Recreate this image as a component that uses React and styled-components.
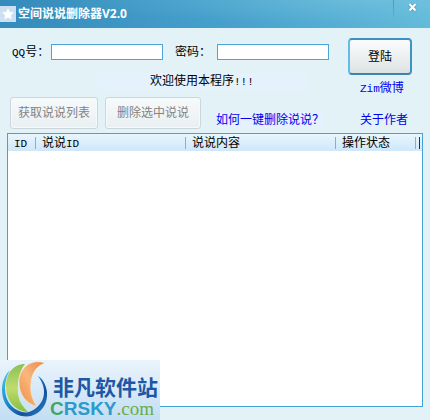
import React, { useState } from 'react';
import styled, { createGlobalStyle } from 'styled-components';

const GlobalStyle = createGlobalStyle`
  * { box-sizing: border-box; }
  body {
    margin: 0;
    background: #e3f2f7;
    color: #000;
    font-family: "Liberation Sans", "Noto Sans CJK SC", sans-serif;
    font-size: 12px;
    line-height: 16px;
  }
  button, input { font: inherit; }
`;

const Window = styled.div`
  position: relative;
  display: flex;
  flex-direction: column;
  min-height: 100vh;
  overflow: hidden;
`;

const TitleBar = styled.header`
  display: flex;
  align-items: center;
  height: 28px;
  padding-right: 10px;
  background:
    radial-gradient(ellipse at 85% 0, rgba(130, 205, 228, 0.4), transparent 60%),
    linear-gradient(90deg, #358bbb, #459fcb 50%, #63bada);
`;

const AppIcon = styled.svg`
  width: 16px;
  height: 16px;
  background: #cbe0f2;
`;

const Title = styled.h1`
  flex: 1;
  margin: 0 0 0 2px;
  font-family: "Open Sans", "Noto Sans CJK SC", sans-serif;
  font-size: 12px;
  font-weight: 700;
  color: #fff;
`;

const CloseButton = styled.button`
  display: flex;
  align-items: flex-start;
  justify-content: flex-end;
  width: 27px;
  height: 28px;
  padding: 3px 3px 0 0;
  border: none;
  background: linear-gradient(#4a9dc0, #5cabcb) 0 0 / 1px 16px no-repeat;
  cursor: pointer;
`;

const Panel = styled.main`
  display: flex;
  justify-content: space-between;
  padding: 10px 18px 4px 10px;
`;

const Controls = styled.div`
  display: flex;
  flex-direction: column;
`;

const Fields = styled.div`
  display: flex;
  align-items: center;
  height: 28px;
  padding-left: 2px;
`;

const Label = styled.label`
  width: ${p => p.$width}px;
  white-space: nowrap;
`;

const TextBox = styled.input`
  width: 112px;
  height: 16px;
  margin-right: 12px;
  padding: 0 3px;
  border: 1px solid #4da4d8;
  background: #fff;
  outline: none;
`;

// latin characters take about half the width of a chinese one
const Latin = styled.span`
  font-family: "Liberation Mono", monospace;
  font-size: 11px;
  line-height: 1;
`;

const Message = styled.p`
  width: 210px;
  margin: 7px 0 7px 87px;
  padding-left: 53px;
  background: #e5f1fc;
  line-height: 17px;
  white-space: nowrap;
`;

const Actions = styled.div`
  display: flex;
  align-items: center;
  gap: 7px;
`;

const ActionButton = styled.button`
  height: 32px;
  width: ${p => p.$width}px;
  padding: 0;
  border: 1px solid #ccd7dd;
  border-radius: 3px;
  background: linear-gradient(#f7fafb, #e9eff2);
  box-shadow: inset 0 0 0 1px #f4f9fb;
  color: #838383;
  white-space: nowrap;
`;

const Side = styled.aside`
  display: flex;
  flex-direction: column;
  align-items: flex-start;
  width: 64px;
`;

const LoginButton = styled.button`
  width: 64px;
  height: 37px;
  padding: 0;
  border: 2px solid;
  border-color: #3c8fc0 #3f93c0 #3c84ad #62bce6;
  border-radius: 4px;
  background: linear-gradient(#fafbfc, #edf0f1 50%, #dce2e4);
  cursor: pointer;
`;

const Link = styled.a`
  color: #0000f0;
  text-decoration: none;
  white-space: nowrap;
`;

const HelpLink = styled(Link)`
  margin: 14px 0 0 8px;
  background: #e5f1fc;
`;

const SideLink = styled(Link)`
  margin: ${p => p.$top}px 0 0 12px;
`;

const ListBox = styled.section`
  flex: 1;
  margin: 0 7px 13px;
  border: 1px solid #45a1d8;
  background: #fff;
`;

const Table = styled.table`
  width: 100%;
  border-collapse: collapse;
  table-layout: fixed;
`;

const Col = styled.col`
  width: ${p => p.$width}px;
`;

const HeadCell = styled.th`
  height: 17px;
  padding: 0 0 0 6px;
  background:
    linear-gradient(#72b7df, #72b7df) right 3px / 1px 12px no-repeat,
    linear-gradient(#e8f6fe, #cfe7f9);
  font-weight: 400;
  line-height: 16px;
  text-align: left;
  white-space: nowrap;
`;

const EndCell = styled.td`
  padding: 0;
  background:
    linear-gradient(#1b3448, #1b3448) 3px 3px / 1px 12px no-repeat,
    linear-gradient(#e8f6fe, #cfe7f9);
`;

const Brand = styled.div`
  position: absolute;
  left: 0;
  bottom: 0;
  display: flex;
  width: 160px;
  height: 60px;
  background: linear-gradient(#eaf4fc, #c2def3);
`;

const BrandMark = styled.svg`
  flex: none;
  width: 50px;
  height: 60px;
`;

const BrandText = styled.div`
  padding-top: 16px;
  white-space: nowrap;
`;

const BrandName = styled.div`
  padding-left: 3px;
  color: #1d57a6;
  font-size: 21px;
  font-weight: 700;
  line-height: 24px;
`;

const BrandSite = styled.div`
  color: #2c9ad0;
  font-size: 19px;
  font-weight: 700;
  line-height: 18px;
`;

const Initial = styled.span`
  color: #3fa66b;
`;

const Domain = styled.span`
  color: #69ad45;
  font-family: "Liberation Serif", serif;
  font-weight: 400;
`;

const columns = [
  { key: 'id', width: 28, title: <Latin>ID</Latin> },
  { key: 'postId', width: 150, title: <>说说<Latin>ID</Latin></> },
  { key: 'content', width: 150, title: '说说内容' },
  { key: 'status', width: 80, title: '操作状态' }
];

function BrandLogo() {
  return (
    <Brand>
      <BrandMark viewBox="0 0 50 60" aria-hidden="true">
        <defs>
          <linearGradient id="ring" x1="0" y1="0" x2="1" y2="1">
            <stop offset="0" stopColor="#58c4ec" />
            <stop offset="0.4" stopColor="#168fce" />
            <stop offset="0.7" stopColor="#174f9c" />
            <stop offset="1" stopColor="#2a8fd0" />
          </linearGradient>
          <linearGradient id="orange" x1="1" y1="0" x2="0" y2="1">
            <stop offset="0" stopColor="#e98748" />
            <stop offset="0.5" stopColor="#f9b77c" />
            <stop offset="1" stopColor="#ee8b3f" />
          </linearGradient>
          <linearGradient id="green" x1="0" y1="0" x2="0" y2="1">
            <stop offset="0" stopColor="#8cc152" />
            <stop offset="0.5" stopColor="#bfdc6c" />
            <stop offset="1" stopColor="#86bf3e" />
          </linearGradient>
        </defs>
        <path d="M10 10C1 18 0 33 5 43c6 11 17 15 26 13 11-3 17-13 16-24-1-7-4-13-9-16 6 8 8 17 4 25-5 8-12 13-20 11C11 49 5 40 5 28c0-7 2-13 5-18Z" fill="url(#ring)" />
        <path d="M25 4C13 4 6 14 6 26c0 15 9 25 22 26-8-8-11-15-10-26 0-9 3-17 7-22Z" fill="url(#green)" />
        <path d="M45 3C30-2 19 9 19 22c0 13 7 21 18 25-5-8-7-15-6-24 1-11 6-17 14-20Z" fill="url(#orange)" stroke="#faf3ea" strokeWidth="0.500" />
      </BrandMark>
      <BrandText>
        <BrandName>非凡软件站</BrandName>
        <BrandSite><Initial>C</Initial>RSKY<Domain>.com</Domain></BrandSite>
      </BrandText>
    </Brand>
  );
}

export default function App() {
  const [account, setAccount] = useState('');
  const [password, setPassword] = useState('');

  return (
    <Window>
      <GlobalStyle />
      <TitleBar>
        <AppIcon viewBox="0 0 16 16" aria-hidden="true">
          <path d="M8 2l1.8 3.9 4.2.5-3.1 2.9.8 4.2L8 11.4l-3.7 2.1.8-4.2L2 6.4l4.2-.5z" fill="#fff" />
        </AppIcon>
        <Title>空间说说删除器V2.0</Title>
        <CloseButton aria-label="关闭">
          <svg width="9" height="9" viewBox="0 0 9 9">
            <path d="M1.5 1l6 6.500M7.500 1l-6 6.500" stroke="#2e7ba1" strokeWidth="3.500" opacity="0.4" />
            <path d="M1.500 1l6 6.500M7.500 1l-6 6.500" stroke="#fff" strokeWidth="2" />
          </svg>
        </CloseButton>
      </TitleBar>

      <Panel>
        <Controls>
          <Fields>
            <Label htmlFor="account" $width={39}><Latin>QQ</Latin>号：</Label>
            <TextBox id="account" value={account} onChange={e => setAccount(e.target.value)} />
            <Label htmlFor="password" $width={42}>密码：</Label>
            <TextBox id="password" type="password" value={password} onChange={e => setPassword(e.target.value)} />
          </Fields>
          <Message>欢迎使用本程序<Latin>!!!</Latin></Message>
          <Actions>
            <ActionButton $width={88} disabled>获取说说列表</ActionButton>
            <ActionButton $width={96} disabled>删除选中说说</ActionButton>
            <HelpLink href="#help">如何一键删除说说？</HelpLink>
          </Actions>
        </Controls>
        <Side>
          <LoginButton>登陆</LoginButton>
          <SideLink href="#weibo" $top={5}><Latin>Zim</Latin>微博</SideLink>
          <SideLink href="#about" $top={16}>关于作者</SideLink>
        </Side>
      </Panel>

      <ListBox>
        <Table>
          <colgroup>
            {columns.map(c => <Col key={c.key} $width={c.width} />)}
            <col />
          </colgroup>
          <thead>
            <tr>
              {columns.map(c => <HeadCell key={c.key} scope="col">{c.title}</HeadCell>)}
              <EndCell />
            </tr>
          </thead>
        </Table>
      </ListBox>

      <BrandLogo />
    </Window>
  );
}
